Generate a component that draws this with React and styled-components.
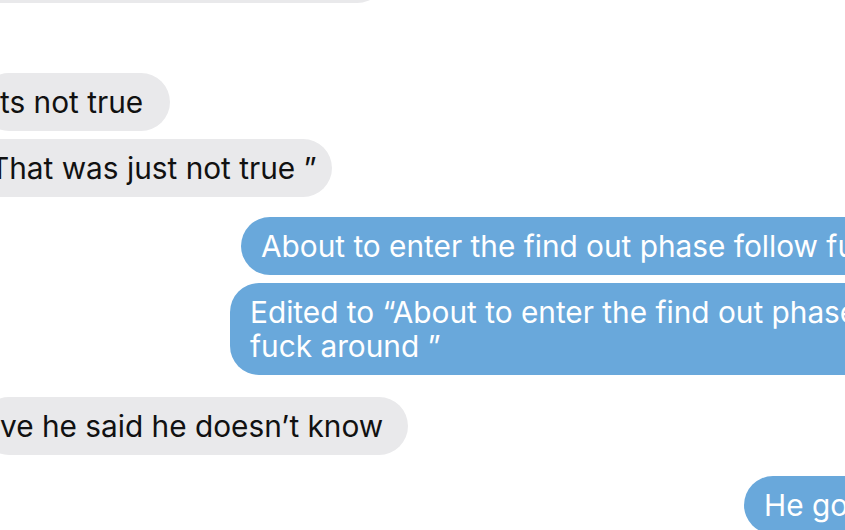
import React from "react";
import styled, { createGlobalStyle } from "styled-components";

const GlobalStyle = createGlobalStyle`
  html, body {
    margin: 0;
    padding: 0;
    background: #ffffff;
    overflow: hidden;
  }
  body {
    width: 845px;
    height: 530px;
    font-family: Inter, "Liberation Sans", Arial, sans-serif;
  }
`;

const Thread = styled.main`
  display: flex;
  flex-direction: column;
  width: 845px;
  height: 530px;
  overflow: hidden;
`;

const Group = styled.section`
  display: flex;
  flex-direction: column;
  align-items: flex-start;
  gap: 8px;
  margin-top: ${(p) => p.$space}px;
`;

const Bubble = styled.div`
  box-sizing: border-box;
  flex-shrink: 0;
  font-size: 29.8px;
  line-height: 34px;
  padding: 12px 24px 12px 20px;
  border-radius: 29px;
  white-space: nowrap;
  margin-left: ${(p) => p.$lead}px;
`;

const Received = styled(Bubble)`
  background: #e9e9eb;
  color: #111111;
  padding-right: ${(p) => p.$tail || 24}px;
`;

const Sent = styled(Bubble)`
  background: #69a8db;
  color: #ffffff;
  padding-right: 40px;
`;

export default function App() {
  return (
    <>
      <GlobalStyle />
      <Thread>
        <Group $space={-55}>
          <Received $lead={-180}>I guess he just didn’t want to say that</Received>
        </Group>
        <Group $space={70}>
          <Received $lead={-20} $tail={27}>ts not true</Received>
          <Received $lead={-30} $tail={15}>That was just not true ”</Received>
        </Group>
        <Group $space={20}>
          <Sent $lead={241}>About to enter the find out phase follow fuck around</Sent>
          <Sent $lead={230}>
            Edited to “About to enter the find out phase follow
            <br />
            fuck around ”
          </Sent>
        </Group>
        <Group $space={22}>
          <Received $lead={-20} $tail={25}>ve he said he doesn’t know</Received>
        </Group>
        <Group $space={21}>
          <Sent $lead={744}>He got it</Sent>
        </Group>
      </Thread>
    </>
  );
}
